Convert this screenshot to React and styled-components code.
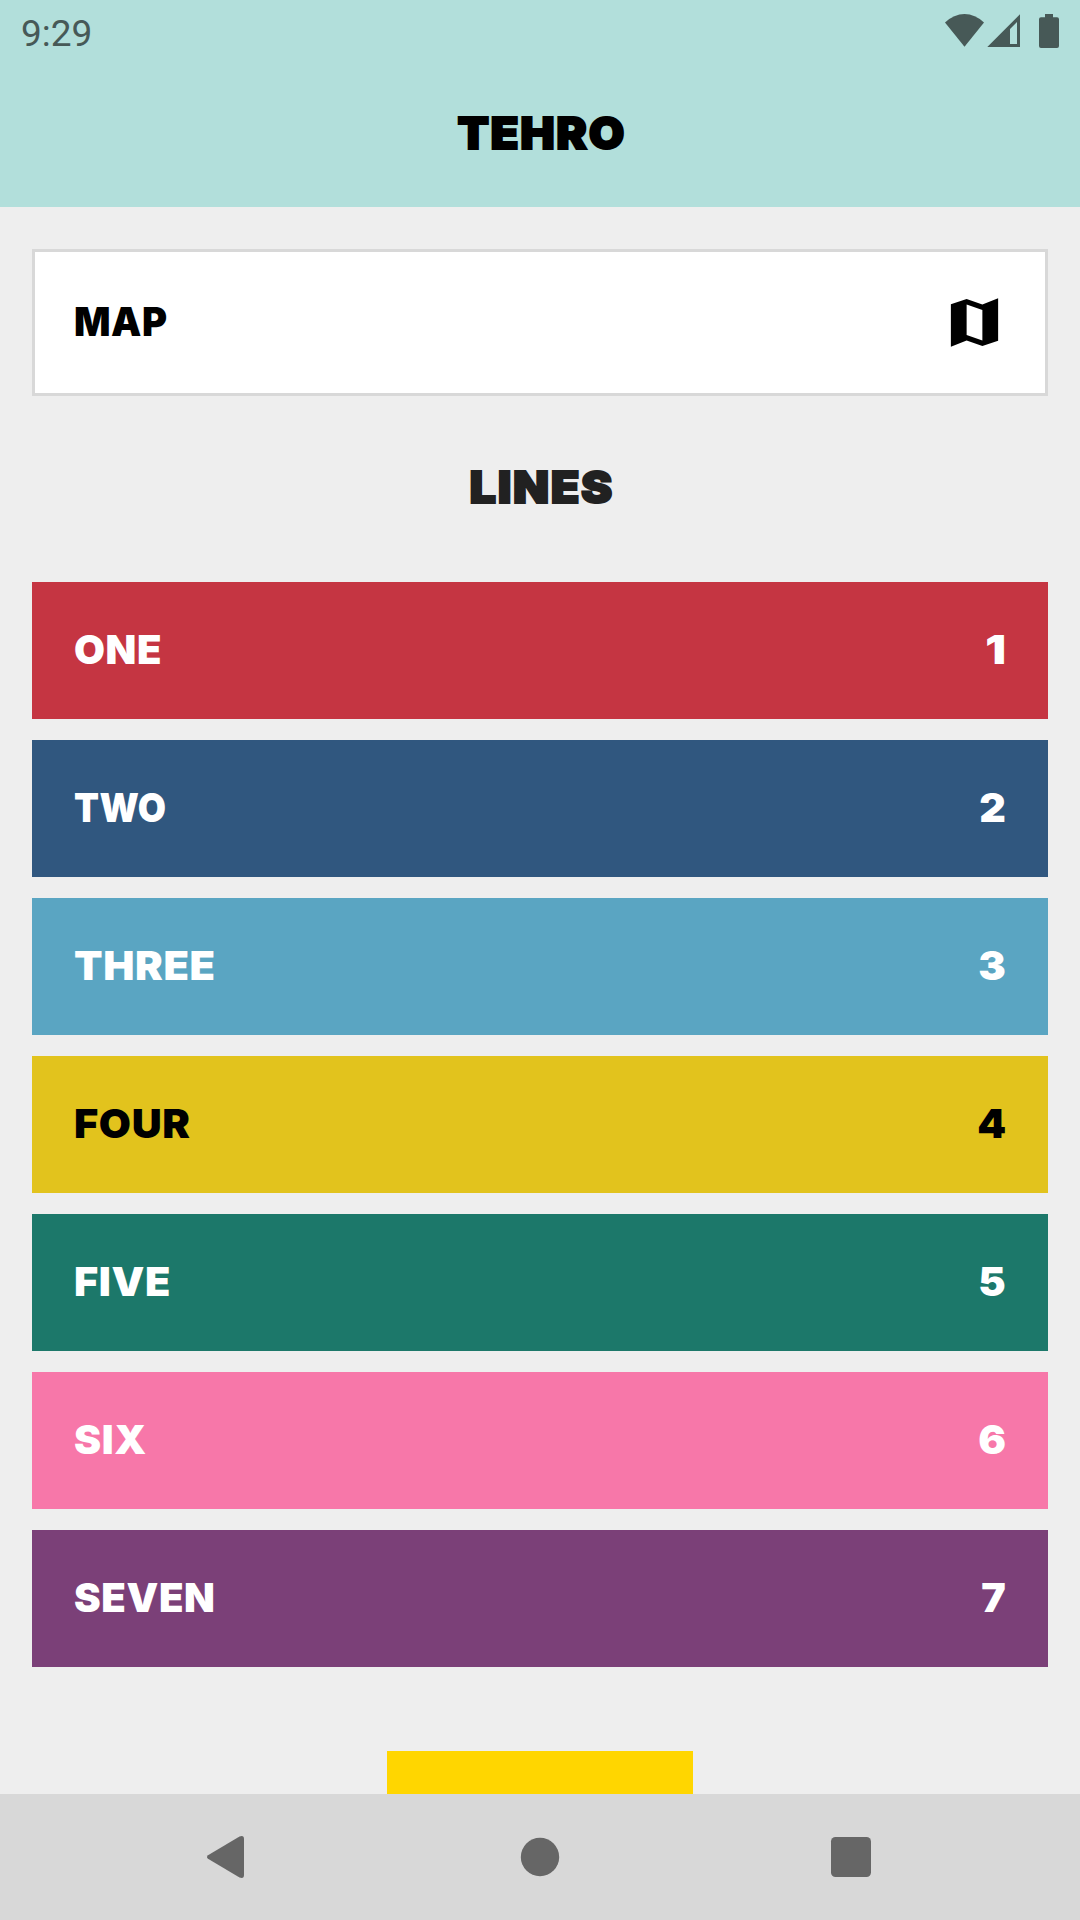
import React from "react";
import styled, { createGlobalStyle } from "styled-components";

const GlobalStyle = createGlobalStyle`
  *, *::before, *::after { box-sizing: border-box; }
  body { margin: 0; background: #eeeeee; font-family: Inter, "Liberation Sans", sans-serif; }
`;

const Screen = styled.div`
  display: flex;
  flex-direction: column;
  width: 1080px;
  height: 1920px;
  overflow: hidden;
  background: #eeeeee;
`;

const TopArea = styled.header`
  flex: none;
  height: 207px;
  background: #b2dfdb;
`;

const StatusBar = styled.div`
  display: flex;
  align-items: center;
  justify-content: space-between;
  height: 63px;
  padding: 0 15px 0 21px;
  color: #475957;
`;

const Clock = styled.span`
  font: 400 37px/44px Roboto, sans-serif;
  padding-top: 4px;
`;

const StatusIcons = styled.svg`
  display: block;
  width: 120px;
  height: 63px;
  fill: currentColor;
`;

const TitleBar = styled.div`
  display: flex;
  align-items: center;
  justify-content: center;
  height: 141px;
  padding-bottom: 1px;
`;

const Heading = styled.h1`
  margin: 0;
  padding-left: 3px;
  font-size: 44px;
  font-weight: 900;
  line-height: 54px;
  letter-spacing: 1.5px;
  color: ${(p) => p.$color};
  -webkit-text-stroke: 2px ${(p) => p.$color};
  transform: scaleX(${(p) => p.$stretch});
`;

const Content = styled.main`
  display: flex;
  flex-direction: column;
  flex: 1;
  min-height: 0;
  overflow: hidden;
  padding: 42px 32px 0;
`;

const Card = styled.div`
  display: flex;
  flex: none;
  align-items: center;
  justify-content: space-between;
  height: ${(p) => (p.$outlined ? 147 : 137)}px;
  padding: 0 ${(p) => (p.$outlined ? 39 : 42)}px;
  border: ${(p) => (p.$outlined ? "3px solid #d8d8d8" : "none")};
  background: ${(p) => p.$bg};
  color: ${(p) => p.$fg};
`;

const Label = styled.span`
  padding-bottom: 2px;
  font-size: 40px;
  font-weight: 900;
  line-height: 50px;
  letter-spacing: 0.6px;
  transform: scaleX(${(p) => p.$stretch});
  transform-origin: left center;
`;

const LineNumber = styled(Label)`
  letter-spacing: 0;
  transform-origin: right center;
`;

const MapIcon = styled.svg`
  display: block;
  width: 63px;
  height: 63px;
  fill: #000;
`;

const SectionTitle = styled.div`
  display: flex;
  flex: none;
  align-items: center;
  justify-content: center;
  height: 186px;
  padding-bottom: 4px;
`;

const LineList = styled.div`
  display: flex;
  flex: none;
  flex-direction: column;
  gap: 21px;
`;

const BottomButton = styled.div`
  flex: none;
  align-self: center;
  width: 306px;
  height: 120px;
  margin-top: 84px;
  background: #ffd600;
`;

const NavBar = styled.nav`
  flex: none;
  height: 126px;
  background: #d8d8d8;
`;

const NavIcons = styled.svg`
  display: block;
  width: 1080px;
  height: 126px;
  fill: #666666;
`;

const lines = [
  { name: "ONE", stretch: 1, bg: "#c53542" },
  { name: "TWO", stretch: 0.91, bg: "#30577f" },
  { name: "THREE", stretch: 1.04, bg: "#5aa5c2" },
  { name: "FOUR", stretch: 1.037, bg: "#e2c31d", fg: "#000" },
  { name: "FIVE", stretch: 1.034, bg: "#1c786a" },
  { name: "SIX", stretch: 1.02, bg: "#f777a9" },
  { name: "SEVEN", stretch: 1.002, bg: "#7b4078" },
];

export default function App() {
  return (
    <Screen>
      <GlobalStyle />
      <TopArea>
        <StatusBar>
          <Clock>9:29</Clock>
          <StatusIcons viewBox="945 0 120 63">
            <path d="M945 22.5Q954 14 964.5 14T984 22.5L964.5 46.7Z" />
            <path
              fillRule="evenodd"
              d="M1020 14.3V47H987.3ZM1010 29V44H1017V22Z"
            />
            <path d="M1045 14h8v3.3h4q2 0 2 2V46q0 2-2 2h-16q-2 0-2-2V19.3q0-2 2-2h4Z" />
          </StatusIcons>
        </StatusBar>
        <TitleBar>
          <Heading $stretch={1.045} $color="#000">TEHRO</Heading>
        </TitleBar>
      </TopArea>

      <Content>
        <Card $outlined $bg="#fff" $fg="#000">
          <Label $stretch={0.955}>MAP</Label>
          <MapIcon viewBox="0 0 24 24">
            <path d="M15 5.1L9 3 3 5.02v16.2l6-2.33 6 2.1 6-2.02V2.77L15 5.1zm0 13.79l-6-2.11V5.11l6 2.11v11.67z" />
          </MapIcon>
        </Card>
        <SectionTitle>
          <Heading as="h2" $stretch={1.067} $color="#212121">LINES</Heading>
        </SectionTitle>
        <LineList>
          {lines.map((line, i) => (
            <Card key={line.name} $bg={line.bg} $fg={line.fg || "#fff"}>
              <Label $stretch={line.stretch}>{line.name}</Label>
              <LineNumber $stretch={i === 0 ? 1.15 : 1.03}>{i + 1}</LineNumber>
            </Card>
          ))}
        </LineList>
        <BottomButton />
      </Content>

      <NavBar>
        <NavIcons viewBox="0 1794 1080 126">
          <path d="M208 1855.2L239.5 1836.5Q244 1834.8 244 1839V1875Q244 1879.2 239.5 1877.5L208 1858.8Q206 1857 208 1855.2Z" />
          <circle cx="540" cy="1857" r="19.2" />
          <rect x="831" y="1837" width="40" height="40" rx="4.5" />
        </NavIcons>
      </NavBar>
    </Screen>
  );
}
